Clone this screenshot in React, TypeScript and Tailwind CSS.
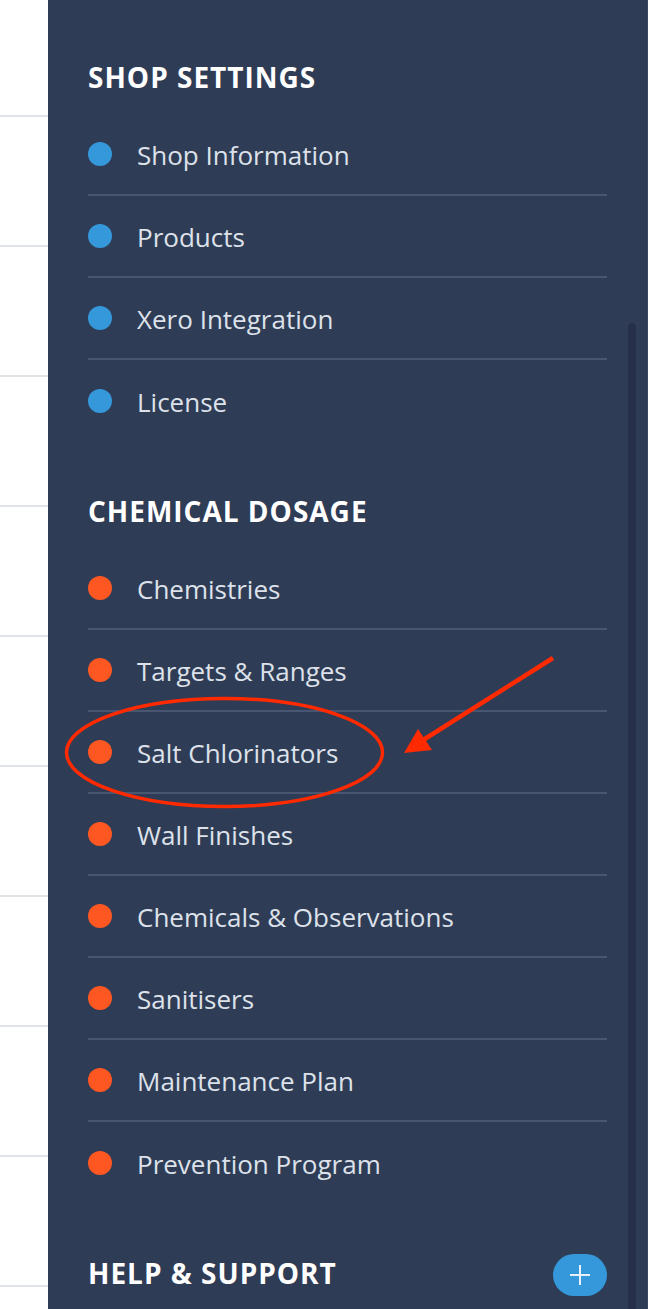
import React from "react";

const shop = ["Shop Information", "Products", "Xero Integration", "License"];
const chem = [
  "Chemistries",
  "Targets & Ranges",
  "Salt Chlorinators",
  "Wall Finishes",
  "Chemicals & Observations",
  "Sanitisers",
  "Maintenance Plan",
  "Prevention Program",
];

function Row({ label, dot, last }: { label: string; dot: string; last: boolean }) {
  return (
    <div
      className={
        "flex items-center h-[82px] " +
        (last ? "" : "border-b-2 border-[#495672]")
      }
    >
      <span className={"w-[24px] h-[24px] rounded-full shrink-0 " + dot} />
      <span className="ml-[25px] text-[26px] leading-[32px] text-[#dde2ea] translate-y-[1px]">{label}</span>
    </div>
  );
}

function Heading({ children }: { children: React.ReactNode }) {
  return (
    <div className="h-[32px] leading-[32px] text-[28px] font-bold tracking-[1px] text-white">
      {children}
    </div>
  );
}

export default function App() {
  const lines = Array.from({ length: 9 });
  return (
    <div
      className="relative flex w-[648px] h-[1309px] overflow-hidden bg-white"
      style={{ fontFamily: '"Open Sans", "Noto Sans", sans-serif' }}
    >
      <div className="w-[48px] shrink-0 bg-white">
        <div className="h-[117px] border-b-2 border-[#dfe3e8]" />
        {lines.map((_, i) => (
          <div key={i} className="h-[130px] border-b-2 border-[#dfe3e8]" />
        ))}
      </div>
      <div className="relative flex-1 bg-[#2f3c56] pl-[40px] pr-[40px] pt-[61px] border-r border-[#3a4865]">
        <Heading>SHOP SETTINGS</Heading>
        <div className="mt-[21px]">
          {shop.map((s, i) => (
            <Row key={s} label={s} dot="bg-[#3498db]" last={i === shop.length - 1} />
          ))}
        </div>
        <div className="mt-[53px]">
          <Heading>CHEMICAL DOSAGE</Heading>
        </div>
        <div className="mt-[21px]">
          {chem.map((s, i) => (
            <Row key={s} label={s} dot="bg-[#ff5722]" last={i === chem.length - 1} />
          ))}
        </div>
        <div className="mt-[53px] flex items-start justify-between">
          <Heading>HELP &amp; SUPPORT</Heading>
          <button className="-mt-[3px] w-[54px] h-[42px] rounded-full bg-[#3498db] flex items-center justify-center">
            <svg width="20" height="20" viewBox="0 0 20 20">
              <path d="M10 0V20M0 10H20" stroke="#e8f1fa" strokeWidth="2" />
            </svg>
          </button>
        </div>
        <div className="absolute right-[11px] top-[323px] bottom-0 w-[8px] rounded-t-full bg-[#263149]" />
      </div>
      <svg className="absolute inset-0 pointer-events-none" width="648" height="1309">
        <ellipse cx="224.5" cy="752.5" rx="158" ry="54" fill="none" stroke="#ff2a00" strokeWidth="3.5" />
        <line x1="553" y1="658" x2="420" y2="742" stroke="#ff2a00" strokeWidth="4.5" />
        <polygon points="404,753 418,729 432,750" fill="#ff2a00" />
      </svg>
    </div>
  );
}
